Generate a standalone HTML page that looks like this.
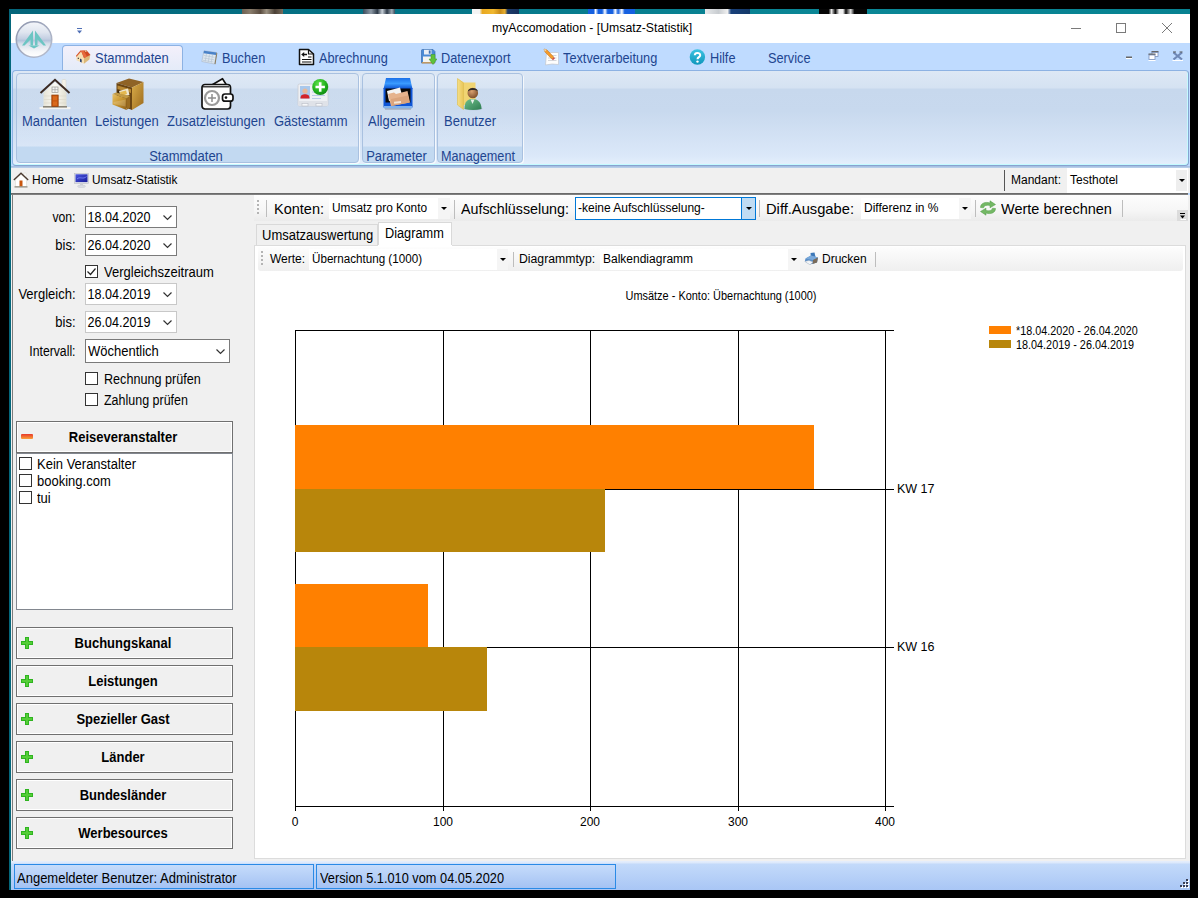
<!DOCTYPE html>
<html><head><meta charset="utf-8">
<style>
*{box-sizing:border-box;margin:0;padding:0}
html,body{width:1198px;height:898px;overflow:hidden;background:#000}
body{font-family:"Liberation Sans",sans-serif;font-size:12px;color:#000;position:relative}
.a{position:absolute}
.t{position:absolute;white-space:nowrap;line-height:1}
.rb{color:#1e4590;font-size:13px;transform:scaleY(1.08);transform-origin:50% 0}
.lbl{font-size:13px;transform:scaleY(1.08);transform-origin:100% 0}
.box{position:absolute;background:#fff;border:1px solid #7a7a7a}
.box2{position:absolute;background:#fff;border:1px solid #c8c8c8}
.cb{position:absolute;width:13px;height:13px;border:1px solid #333;background:#fff}
.btn{position:absolute;left:16px;width:217px;height:32px;border:1px solid #707070;background:#f0f0f0;box-shadow:inset 0 0 0 1px #fff}
.btn .t{font-weight:bold;font-size:13px;left:-1.500px;width:215px;text-align:center;top:8px;transform:scaleY(1.08);transform-origin:50% 0}

.grp{border:1px solid #a9c1e0;border-radius:4px;box-shadow:1px 1px 0 rgba(255,255,255,.75);background:linear-gradient(rgba(255,255,255,.08) 0,rgba(255,255,255,.05) 72px,#c2d9f1 73px,#c2d9f1 100%)}

.sg{font-size:15px;transform-origin:0 0}
.ax{width:40px;text-align:center;font-size:12px;transform:scaleY(1.08);transform-origin:50% 0}
.grip{width:2px;height:14px;background:repeating-linear-gradient(#b4b4b4 0,#b4b4b4 2px,transparent 2px,transparent 4px)}
.ms{transform:scaleY(1.08);transform-origin:0 0}
</style></head><body>
<!-- desktop strip -->
<div class="a" id="desk" style="left:9px;top:9px;width:1181px;height:5px;background:linear-gradient(90deg,#04657a 0,#06788a 40%,#0a8796 70%,#078291 100%)"></div>
<div class="a" style="left:242px;top:9px;width:41px;height:5px;background:linear-gradient(90deg,#6e6050,#8a7d6c 20%,#5a4c40 45%,#9a9080 60%,#4a4036 80%,#7a6c5c)"></div>
<div class="a" style="left:363px;top:9px;width:32px;height:5px;background:linear-gradient(90deg,#3b4c5c,#8e9aa6 25%,#2d3a48 45%,#c8d0d8 60%,#2d3a48 75%,#a0aab4 90%,#3b4c5c)"></div>
<div class="a" style="left:472px;top:9px;width:47px;height:5px;background:linear-gradient(90deg,#f4f4f4 0,#f4f4f4 16%,#e8a820 22%,#f0b830 45%,#c88a18 60%,#e8b030 70%,#1c3a6a 76%,#16305c 100%)"></div>
<div class="a" style="left:588px;top:9px;width:47px;height:5px;background:linear-gradient(90deg,#1560e0 0,#1560e0 12%,#fff 16%,#1560e0 22%,#1560e0 30%,#fff 36%,#1560e0 42%,#1560e0 52%,#fff 58%,#1560e0 64%,#fff 72%,#1560e0 78%,#1560e0 100%)"></div>
<div class="a" style="left:705px;top:9px;width:45px;height:5px;background:linear-gradient(90deg,#e8eaec 0,#c8ccd0 30%,#f0f0f0 50%,#18407a 58%,#143868 100%)"></div>
<div class="a" style="left:819px;top:9px;width:48px;height:5px;background:linear-gradient(90deg,#060606 0,#060606 20%,#e8e8e8 26%,#060606 34%,#f0f0f0 42%,#f0f0f0 50%,#060606 56%,#e0e0e0 66%,#060606 74%,#060606 100%)"></div>
<!-- window -->
<div class="a" id="win" style="left:9px;top:14px;width:1181px;height:876px;background:#bfdbff"></div>
<div class="a" style="left:9px;top:14px;width:2px;height:876px;background:#04677b"></div>
<!-- title bar -->
<div class="a" id="title" style="left:11px;top:14px;width:1179px;height:29px;background:#fff"></div>
<div class="t" style="left:492px;top:22px;font-size:12.25px;width:200px;text-align:center">myAccomodation - [Umsatz-Statistik]</div>

<!-- window controls -->
<svg class="a" style="left:1060px;top:14px" width="130" height="29" viewBox="0 0 130 29">
 <path d="M11 14.5H21" stroke="#7a7a7a" stroke-width="1" fill="none"/>
 <rect x="56.5" y="9.5" width="9" height="9" stroke="#7a7a7a" fill="none"/>
 <path d="M102 9L112 19M112 9L102 19" stroke="#7a7a7a" stroke-width="1" fill="none"/>
</svg>
<!-- QAT arrow -->
<svg class="a" style="left:76px;top:27px" width="8" height="8" viewBox="0 0 8 8"><path d="M1 1.5H6" stroke="#4f6fb5" stroke-width="1"/><path d="M1 3.5H6L3.5 6.5Z" fill="#4f6fb5"/></svg>
<!-- orb -->
<svg class="a" style="left:14px;top:20px" width="40" height="40" viewBox="0 0 40 40">
 <defs>
  <linearGradient id="og" x1="0" y1="0" x2="0" y2="1"><stop offset="0" stop-color="#f4f6fa"/><stop offset="0.30" stop-color="#dfe5ef"/><stop offset="0.48" stop-color="#c3cfe2"/><stop offset="0.53" stop-color="#b4c3db"/><stop offset="0.62" stop-color="#d6deea"/><stop offset="0.85" stop-color="#f7f8fa"/><stop offset="1" stop-color="#ffffff"/></linearGradient>
  <linearGradient id="os" x1="0" y1="0" x2="1" y2="1"><stop offset="0" stop-color="#8e96ae"/><stop offset="1" stop-color="#b8bfd0"/></linearGradient>
 </defs>
 <circle cx="20" cy="19.500" r="17.700" fill="url(#og)" stroke="url(#os)" stroke-width="1.600"/>
 <path d="M8 25.500L19 10.500V25.500H16.500V19.500L10.500 25.500Z" fill="#6cc5c3"/>
 <path d="M32 25.500L21 10.500V25.500H23.500V19.500L29.500 25.500Z" fill="#6cc5c3"/>
 <path d="M14.500 25.500H25.500L20 28.500Z" fill="#6cc5c3"/>
</svg>
<!-- ribbon tabs -->
<div class="a" style="left:62px;top:45px;width:121px;height:26px;border:1px solid #8db2e3;border-bottom:none;border-radius:4px 4px 0 0;background:linear-gradient(#f3f0fb,#e4ebf8)"></div>
<div class="t rb" style="left:95px;top:51px">Stammdaten</div>
<div class="t rb" style="left:222px;top:52px;font-size:12.75px">Buchen</div>
<div class="t rb" style="left:319px;top:52px;font-size:12.75px">Abrechnung</div>
<div class="t rb" style="left:441px;top:52px;font-size:12.75px">Datenexport</div>
<div class="t rb" style="left:563px;top:52px;font-size:12.75px">Textverarbeitung</div>
<div class="t rb" style="left:710px;top:52px;font-size:12.75px">Hilfe</div>
<div class="t rb" style="left:768px;top:52px;font-size:12.75px">Service</div>
<!-- ribbon body -->
<div class="a" id="ribbon" style="left:12px;top:70px;width:1177px;height:96px;border:1px solid #86a3d0;border-top-color:#8db2e3;border-left-color:#8db2e3;border-radius:4px;box-shadow:inset -1px -1px 0 #c4fbff;background:linear-gradient(#dde8f5 0,#d5e2f2 17px,#c7d8ed 18px,#c8d9ee 40px,#dbe8f9 85px,#e4effc 93px)"></div>
<div class="a" style="left:11px;top:166px;width:1179px;height:2px;background:linear-gradient(#a0badf,#bfd3ec)"></div>
<!-- groups -->
<div class="a grp" style="left:16px;top:73px;width:343px;height:90px"></div>
<div class="a grp" style="left:362px;top:73px;width:73px;height:90px"></div>
<div class="a grp" style="left:437px;top:73px;width:86px;height:90px"></div>
<div class="t rb" style="left:14.500px;width:343px;text-align:center;top:149px">Stammdaten</div>
<div class="t rb" style="left:360px;width:73px;text-align:center;top:149px">Parameter</div>
<div class="t rb" style="left:434.500px;width:86px;text-align:center;top:149px;transform:scale(.975,1.08)">Management</div>
<div class="t rb" style="left:22px;top:114px">Mandanten</div>
<div class="t rb" style="left:95px;top:114px">Leistungen</div>
<div class="t rb" style="left:167px;top:114px">Zusatzleistungen</div>
<div class="t rb" style="left:274px;top:114px">Gästestamm</div>
<div class="t rb" style="left:368px;top:114px">Allgemein</div>
<div class="t rb" style="left:444px;top:114px">Benutzer</div>

<!-- breadcrumb bar -->
<div class="a" style="left:11px;top:168px;width:1179px;height:25px;background:#f0f0f0"></div>
<div class="a" style="left:11px;top:193px;width:1177px;height:2px;background:linear-gradient(#5f5f5f,#8a8a8a)"></div>
<div class="t" style="left:32px;top:174px">Home</div>
<div class="t" style="left:92px;top:174px;transform:scaleX(.985);transform-origin:0 0">Umsatz-Statistik</div>
<div class="a" style="left:1004px;top:170px;width:1px;height:21px;background:#555"></div>
<div class="t" style="left:1011px;top:174px">Mandant:</div>
<div class="a" style="left:1067px;top:168px;width:121px;height:25px;background:#fff"></div>
<div class="a" style="left:1176px;top:170px;width:11px;height:21px;background:#eeeeee"></div>
<div class="t" style="left:1070px;top:174px">Testhotel</div>
<svg class="a" style="left:1179px;top:179px" width="6" height="3"><path d="M0 0H6L3 3Z" fill="#000"/></svg>
<!-- main bg -->
<div class="a" id="main" style="left:11px;top:195px;width:1179px;height:667px;background:#f0f0f0"></div>
<div class="a" style="left:12px;top:195px;width:1px;height:666px;background:#7c7c7c"></div>
<!-- left panel fields -->
<div class="t lbl" style="left:15px;width:60.500px;text-align:right;top:210px;transform:scale(.94,1.08)">von:</div>
<div class="box" style="left:85px;top:206px;width:92px;height:22px"></div>
<div class="t" style="left:87.500px;top:212px;font-size:12.6px;transform:scaleY(1.16);transform-origin:0 100%">18.04.2020</div>
<div class="t lbl" style="left:15px;width:60.500px;text-align:right;top:238px">bis:</div>
<div class="box" style="left:85px;top:234px;width:92px;height:22px"></div>
<div class="t" style="left:87.500px;top:240px;font-size:12.6px;transform:scaleY(1.16);transform-origin:0 100%">26.04.2020</div>
<div class="cb" style="left:85px;top:265px"></div>
<svg class="a" style="left:86px;top:266px" width="11" height="11"><path d="M1.5 5.5L4.5 8.5L9.5 2.5" stroke="#222" stroke-width="1.2" fill="none"/></svg>
<div class="t ms" style="left:104px;top:265px;font-size:13px">Vergleichszeitraum</div>
<div class="t lbl" style="left:15px;width:60.500px;text-align:right;top:287px">Vergleich:</div>
<div class="box2" style="left:85px;top:283px;width:92px;height:22px"></div>
<div class="t" style="left:87.500px;top:289px;font-size:12.6px;transform:scaleY(1.16);transform-origin:0 100%">18.04.2019</div>
<div class="t lbl" style="left:15px;width:60.500px;text-align:right;top:315px">bis:</div>
<div class="box2" style="left:85px;top:311px;width:92px;height:22px"></div>
<div class="t" style="left:87.500px;top:317px;font-size:12.6px;transform:scaleY(1.16);transform-origin:0 100%">26.04.2019</div>
<div class="t lbl" style="left:15px;width:60.500px;text-align:right;top:344px;transform:scale(.94,1.08)">Intervall:</div>
<div class="box" style="left:85px;top:339px;width:145px;height:24px"></div>
<div class="t ms" style="left:88px;top:344px;font-size:13px">Wöchentlich</div>
<div class="cb" style="left:85px;top:372px"></div>
<div class="t ms" style="left:104px;top:372px;font-size:13px;transform:scale(.97,1.08)">Rechnung prüfen</div>
<div class="cb" style="left:85px;top:393px"></div>
<div class="t ms" style="left:104px;top:393px;font-size:13px;transform:scale(.96,1.08)">Zahlung prüfen</div>
<!-- chevrons -->
<svg class="a" style="left:163px;top:215px" width="9" height="6"><path d="M0.5 0.5L4.5 4.5L8.5 0.5" stroke="#333" stroke-width="1.2" fill="none"/></svg>
<svg class="a" style="left:163px;top:243px" width="9" height="6"><path d="M0.5 0.5L4.5 4.5L8.5 0.5" stroke="#333" stroke-width="1.2" fill="none"/></svg>
<svg class="a" style="left:163px;top:292px" width="9" height="6"><path d="M0.5 0.5L4.5 4.5L8.5 0.5" stroke="#333" stroke-width="1.2" fill="none"/></svg>
<svg class="a" style="left:163px;top:320px" width="9" height="6"><path d="M0.5 0.5L4.5 4.5L8.5 0.5" stroke="#333" stroke-width="1.2" fill="none"/></svg>
<svg class="a" style="left:216px;top:349px" width="9" height="6"><path d="M0.5 0.5L4.5 4.5L8.5 0.5" stroke="#333" stroke-width="1.2" fill="none"/></svg>
<!-- Reiseveranstalter -->
<div class="btn" style="top:421px"><div class="t">Reiseveranstalter</div></div>
<div class="a" style="left:21px;top:434px;width:12px;height:5px;background:linear-gradient(#e8382a,#f9a23a);border-radius:1px"></div>
<div class="a" style="left:16px;top:453px;width:217px;height:157px;background:#fff;border:1px solid #82878f"></div>
<div class="cb" style="left:19px;top:457px"></div><div class="t ms" style="left:37px;top:457px;font-size:13px">Kein Veranstalter</div>
<div class="cb" style="left:19px;top:474px"></div><div class="t ms" style="left:37px;top:474px;font-size:13px">booking.com</div>
<div class="cb" style="left:19px;top:491px"></div><div class="t ms" style="left:37px;top:491px;font-size:13px">tui</div>
<div class="btn" style="top:627px"><div class="t">Buchungskanal</div></div>
<div class="btn" style="top:665px"><div class="t">Leistungen</div></div>
<div class="btn" style="top:703px"><div class="t">Spezieller Gast</div></div>
<div class="btn" style="top:741px"><div class="t">Länder</div></div>
<div class="btn" style="top:779px"><div class="t">Bundesländer</div></div>
<div class="btn" style="top:817px"><div class="t">Werbesources</div></div>
<svg class="a" style="left:21px;top:637px" width="12" height="12"><path d="M4 0H8V4H12V8H8V12H4V8H0V4H4Z" fill="#2fb420"/><path d="M5 1H7V5H11V7H7V11H5V7H1V5H5Z" fill="#6fe04a" opacity=".6"/></svg>
<svg class="a" style="left:21px;top:675px" width="12" height="12"><path d="M4 0H8V4H12V8H8V12H4V8H0V4H4Z" fill="#2fb420"/><path d="M5 1H7V5H11V7H7V11H5V7H1V5H5Z" fill="#6fe04a" opacity=".6"/></svg>
<svg class="a" style="left:21px;top:713px" width="12" height="12"><path d="M4 0H8V4H12V8H8V12H4V8H0V4H4Z" fill="#2fb420"/><path d="M5 1H7V5H11V7H7V11H5V7H1V5H5Z" fill="#6fe04a" opacity=".6"/></svg>
<svg class="a" style="left:21px;top:751px" width="12" height="12"><path d="M4 0H8V4H12V8H8V12H4V8H0V4H4Z" fill="#2fb420"/><path d="M5 1H7V5H11V7H7V11H5V7H1V5H5Z" fill="#6fe04a" opacity=".6"/></svg>
<svg class="a" style="left:21px;top:789px" width="12" height="12"><path d="M4 0H8V4H12V8H8V12H4V8H0V4H4Z" fill="#2fb420"/><path d="M5 1H7V5H11V7H7V11H5V7H1V5H5Z" fill="#6fe04a" opacity=".6"/></svg>
<svg class="a" style="left:21px;top:827px" width="12" height="12"><path d="M4 0H8V4H12V8H8V12H4V8H0V4H4Z" fill="#2fb420"/><path d="M5 1H7V5H11V7H7V11H5V7H1V5H5Z" fill="#6fe04a" opacity=".6"/></svg>

<!-- status bar -->
<div class="a" style="left:11px;top:861px;width:1179px;height:29px;background:linear-gradient(#e6effc 0,#dbe8fb 2px,#c3dafa 3px,#a9c6f5 100%)"></div>
<div class="a" style="left:14px;top:864px;width:300px;height:25px;border:1px solid #2a8ae6;background:linear-gradient(#c6dcfb,#a4c2f3)"></div>
<div class="a" style="left:316px;top:864px;width:300px;height:25px;border:1px solid #2a8ae6;background:linear-gradient(#c6dcfb,#a4c2f3)"></div>
<div class="t ms" style="left:17px;top:871px;font-size:13px">Angemeldeter Benutzer: Administrator</div>
<div class="t ms" style="left:320px;top:871px;font-size:13px;transform:scale(.983,1.08)">Version 5.1.010 vom 04.05.2020</div>

<!-- splitter / right panel -->
<!-- toolbar 1 -->
<div class="a" style="left:254px;top:195px;width:934px;height:26px;background:linear-gradient(#fdfdfd,#f6f6f6 60%,#ebebeb)"></div>
<div class="a grip" style="left:257px;top:200px"></div>
<div class="a" style="left:266px;top:200px;width:1px;height:17px;background:#bdbdbd"></div>
<div class="t sg" style="left:273.500px;top:201px;transform:scaleX(.967)">Konten:</div>
<div class="a" style="left:329px;top:198px;width:121px;height:21px;background:#fff"></div>
<div class="a" style="left:438px;top:198px;width:12px;height:21px;background:#f5f5f5"></div>
<div class="t" style="left:332px;top:202px;transform:scaleX(.99);transform-origin:0 0">Umsatz pro Konto</div>
<svg class="a" style="left:441px;top:207px" width="6" height="3"><path d="M0 0H6L3 3Z" fill="#000"/></svg>
<div class="a" style="left:454px;top:200px;width:1px;height:19px;background:#bdbdbd"></div>
<div class="t sg" style="left:461px;top:201px;transform:scaleX(.952)">Aufschlüsselung:</div>
<div class="a" style="left:575px;top:197px;width:181px;height:23px;background:#fff;border:1px solid #0078d7"></div>
<div class="a" style="left:741px;top:198px;width:14px;height:21px;background:#c0dcf3;border-left:1px solid #0078d7"></div>
<div class="t" style="left:578px;top:202px">-keine Aufschlüsselung-</div>
<svg class="a" style="left:746px;top:207px" width="6" height="3"><path d="M0 0H6L3 3Z" fill="#000"/></svg>
<div class="a" style="left:759px;top:200px;width:1px;height:17px;background:#bdbdbd"></div>
<div class="t sg" style="left:766px;top:201px;transform:scaleX(.98)">Diff.Ausgabe:</div>
<div class="a" style="left:861px;top:198px;width:110px;height:21px;background:#fff"></div>
<div class="a" style="left:959px;top:198px;width:12px;height:21px;background:#f5f5f5"></div>
<div class="t" style="left:864px;top:202px">Differenz in %</div>
<svg class="a" style="left:962px;top:207px" width="6" height="3"><path d="M0 0H6L3 3Z" fill="#000"/></svg>
<div class="a" style="left:975px;top:200px;width:1px;height:17px;background:#bdbdbd"></div>
<div class="t sg" style="left:1000.500px;top:201px;transform:scaleX(.966)">Werte berechnen</div>
<div class="a" style="left:1122px;top:200px;width:1px;height:17px;background:#bdbdbd"></div>
<!-- tabs -->
<div class="a" style="left:256px;top:224px;width:122px;height:22px;background:#f0f0f0;border:1px solid #d9d9d9;border-bottom:none"></div>
<div class="a" style="left:378px;top:222px;width:74px;height:25px;background:#fff;border:1px solid #d9d9d9;border-bottom:none"></div>
<div class="t ms" style="left:262px;top:228px;font-size:13px">Umsatzauswertung</div>
<div class="t ms" style="left:385px;top:226px;font-size:13px;transform:scale(.98,1.08)">Diagramm</div>
<!-- tab page -->
<div class="a" style="left:254px;top:245px;width:932px;height:614px;background:#fff;border:1px solid #dcdcdc;border-top:none"></div>
<div class="a" style="left:254px;top:245px;width:124px;height:1px;background:#dcdcdc"></div>
<div class="a" style="left:452px;top:245px;width:734px;height:1px;background:#dcdcdc"></div>
<!-- toolbar 2 -->
<div class="a" style="left:258px;top:247px;width:925px;height:24px;background:linear-gradient(#fdfdfd,#efefef);border-radius:0 0 3px 3px"></div>
<div class="a grip" style="left:261px;top:251px"></div>
<div class="t" style="left:270px;top:253px">Werte:</div>
<div class="a" style="left:309px;top:249px;width:199px;height:21px;background:#fff"></div>
<div class="a" style="left:497px;top:249px;width:11px;height:21px;background:#f5f5f5"></div>
<div class="t" style="left:311.500px;top:253px;transform:scaleX(.97);transform-origin:0 0">Übernachtung (1000)</div>
<svg class="a" style="left:499.500px;top:258px" width="6" height="3"><path d="M0 0H6L3 3Z" fill="#000"/></svg>
<div class="a" style="left:513px;top:252px;width:1px;height:15px;background:#bdbdbd"></div>
<div class="t" style="left:519px;top:253px;transform:scaleX(1.02);transform-origin:0 0">Diagrammtyp:</div>
<div class="a" style="left:600px;top:249px;width:200px;height:21px;background:#fff"></div>
<div class="a" style="left:788px;top:249px;width:12px;height:21px;background:#f5f5f5"></div>
<div class="t" style="left:603px;top:253px">Balkendiagramm</div>
<svg class="a" style="left:791px;top:258px" width="6" height="3"><path d="M0 0H6L3 3Z" fill="#000"/></svg>
<div class="t" style="left:822px;top:253px">Drucken</div>
<div class="a" style="left:875px;top:252px;width:1px;height:15px;background:#bdbdbd"></div>
<!-- chart -->
<div class="t" style="left:625px;top:291px;font-size:11px;width:192px;text-align:center;transform:scale(.995,1.12)">Umsätze - Konto: Übernachtung (1000)</div>
<svg class="a" style="left:255px;top:272px" width="930" height="586" viewBox="255 272 930 586" shape-rendering="crispEdges">
 <g stroke="#000" stroke-width="1" fill="none">
  <path d="M295.5 330V811M443.5 330V811M590.5 330V811M738.5 330V811M885.5 330V811"/>
  <path d="M295 330.5H894M295 806.5H894M295 489.5H894M295 647.5H894"/>
 </g>
 <rect x="295" y="425" width="519" height="64" fill="#ff8000"/>
 <rect x="295" y="489" width="310" height="63" fill="#b8860b"/>
 <rect x="295" y="584" width="133" height="63" fill="#ff8000"/>
 <rect x="295" y="647" width="192" height="64" fill="#b8860b"/>
 <rect x="989" y="326" width="22" height="8" fill="#ff8000"/>
 <rect x="989" y="340" width="22" height="8" fill="#b8860b"/>
</svg>
<div class="t ms" style="left:897px;top:482px;font-size:12.5px">KW 17</div>
<div class="t ms" style="left:897px;top:640px;font-size:12.5px">KW 16</div>
<div class="t ax" style="left:275px;top:815px">0</div>
<div class="t ax" style="left:423px;top:815px">100</div>
<div class="t ax" style="left:570px;top:815px">200</div>
<div class="t ax" style="left:718px;top:815px">300</div>
<div class="t ax" style="left:865px;top:815px">400</div>
<div class="t" style="left:1016px;top:325px;font-size:11px;transform:scale(.98,1.12);transform-origin:0 0">*18.04.2020 - 26.04.2020</div>
<div class="t" style="left:1016px;top:339px;font-size:11px;transform:scale(.985,1.12);transform-origin:0 0">18.04.2019 - 26.04.2019</div>

<!-- ===== ICONS ===== -->
<!-- big house (Mandanten) 32x32 at 39,78 -->
<svg class="a" style="left:39px;top:78px" width="32" height="32" viewBox="0 0 32 32">
 <defs><linearGradient id="hw" x1="0" y1="0" x2="1" y2="0"><stop offset="0" stop-color="#e6e3d6"/><stop offset=".5" stop-color="#fbfaf4"/><stop offset="1" stop-color="#e2dfd0"/></linearGradient></defs>
 <rect x="0.5" y="29" width="31" height="2.2" fill="#f4f4f2"/>
 <rect x="23" y="1.5" width="4" height="11" rx="1" fill="#f3f1e8" stroke="#d5d2c4" stroke-width=".5"/>
 <path d="M4.5 14.5L16 4L27.500 14.500V29H4.500Z" fill="url(#hw)"/>
 <path d="M5 18H27M5 21.500H27M5 25H27" stroke="#dcd9ca" stroke-width=".7"/>
 <rect x="4" y="28" width="24" height="1.600" fill="#8a8578"/>
 <path d="M1.5 15L16 1.800L30.500 15" stroke="#3b2a22" stroke-width="2" fill="none" stroke-linejoin="miter"/>
 <rect x="13" y="9" width="6" height="5.500" fill="#f4f4f4" stroke="#9a9a94" stroke-width=".7"/>
 <path d="M16 9V14.500M13 11.700H19" stroke="#9a9a94" stroke-width=".6"/>
 <rect x="12.800" y="17" width="6.400" height="11.500" fill="#c8560f" stroke="#8e3c08" stroke-width=".7"/>
 <rect x="14" y="18.300" width="4" height="4" fill="#d9691c"/><rect x="14" y="23.500" width="4" height="4" fill="#d9691c"/>
</svg>
<!-- cabinet (Leistungen) at 112,78 -->
<svg class="a" style="left:112px;top:78px" width="33" height="33" viewBox="0 0 33 33">
 <defs><linearGradient id="cb1" x1="0" y1="0" x2="1" y2="1"><stop offset="0" stop-color="#d9ac4a"/><stop offset="1" stop-color="#9c6a1c"/></linearGradient>
 <linearGradient id="cb2" x1="0" y1="0" x2="1" y2="1"><stop offset="0" stop-color="#e8c268"/><stop offset=".5" stop-color="#c7952f"/><stop offset="1" stop-color="#8d5e18"/></linearGradient></defs>
 <path d="M4.500 5L17 0.500L31.500 4L20 9.500Z" fill="#8f6326"/>
 <path d="M20 9.500L31.500 4V25L20 32Z" fill="url(#cb1)"/>
 <path d="M4.500 5L20 9.500V32L4.500 26Z" fill="#6b4512"/>
 <path d="M5.500 7.500L19 11.300V15L5.500 11Z" fill="#b98a35"/>
 <path d="M5.500 12L12 14V17L5.500 15Z" fill="#3d2808"/>
 <path d="M7 13L16 10.500L17.500 17L9 19Z" fill="#efe7cf"/>
 <path d="M8 14L14 12.500L15 16L9 18Z" fill="#e4b84e"/>
 <path d="M0.500 16L14.500 20.500V32L0.500 26.500Z" fill="url(#cb2)"/>
 <path d="M14.500 20.500L18 18V29.500L14.500 32Z" fill="#9a6b20"/>
 <path d="M0.500 16L4 14.500L18 18L14.500 20.500Z" fill="#c29a44"/>
 <path d="M1.500 24L13.500 21.500V28.500L1.500 26Z" fill="#ffffff" opacity=".18"/>
</svg>
<!-- wallet (Zusatzleistungen) at 200,77 -->
<svg class="a" style="left:200px;top:77px" width="34" height="34" viewBox="0 0 34 34">
 <path d="M11 8.500L22.500 1.700L26.500 8" fill="#fff" stroke="#111" stroke-width="1.600" stroke-linejoin="round"/>
 <rect x="2" y="7.500" width="28.500" height="24.500" rx="3" fill="#fdfdfd" stroke="#111" stroke-width="1.700"/>
 <path d="M3 9.800H29" stroke="#111" stroke-width="1.200"/>
 <circle cx="12" cy="21" r="7" fill="#fff" stroke="#9a9a9a" stroke-width="2.200"/>
 <path d="M12 17V25M8 21H16" stroke="#8e8e8e" stroke-width="1.500"/>
 <rect x="22.500" y="17" width="10.500" height="7.200" rx="2.500" fill="#fff" stroke="#111" stroke-width="1.700"/>
 <circle cx="26" cy="20.600" r="1.300" fill="#111"/>
</svg>
<!-- guest card (Gaestestamm) at 297,78 -->
<svg class="a" style="left:297px;top:78px" width="34" height="32" viewBox="0 0 34 32">
 <defs><radialGradient id="gp" cx=".4" cy=".3" r=".8"><stop offset="0" stop-color="#5fe24a"/><stop offset=".6" stop-color="#1eae1a"/><stop offset="1" stop-color="#0d7d12"/></radialGradient></defs>
 <rect x="1" y="6" width="30" height="22" rx="1.500" fill="#eef0f4" stroke="#c9ccd3" stroke-width=".8"/>
 <rect x="1.400" y="23" width="29.200" height="5" fill="#dfe2e8"/>
 <rect x="5" y="25.500" width="6" height="2.500" fill="#f7f8fa" stroke="#b9bdc6" stroke-width=".6"/>
 <rect x="19" y="25.500" width="6" height="2.500" fill="#f7f8fa" stroke="#b9bdc6" stroke-width=".6"/>
 <rect x="3" y="8" width="10" height="12.500" fill="#a9c8ec"/>
 <circle cx="8" cy="13" r="2.600" fill="#e8b99a"/>
 <path d="M3.500 20.500C3.500 17 5.500 16.300 8 16.300S12.500 17 12.500 20.500Z" fill="#d2232a"/>
 <path d="M15 14H28M15 17.500H28M15 20.500H24" stroke="#b8cbe6" stroke-width="1"/>
 <circle cx="23.200" cy="9" r="8" fill="url(#gp)"/>
 <path d="M23.200 4.300V13.700M18.500 9H27.900" stroke="#fff" stroke-width="2.600"/>
</svg>
<!-- blue box (Allgemein) at 382,77 -->
<svg class="a" style="left:382px;top:77px" width="32" height="33" viewBox="0 0 32 33">
 <defs><linearGradient id="bb" x1="0" y1="0" x2="0" y2="1"><stop offset="0" stop-color="#1b6fe8"/><stop offset=".5" stop-color="#3a9bff"/><stop offset="1" stop-color="#0a4fd0"/></linearGradient></defs>
 <path d="M4 1H28L30.500 12H1.500Z" fill="url(#bb)"/>
 <rect x="1.500" y="11" width="29" height="19.500" fill="#0f55d6"/>
 <rect x="3.500" y="11.500" width="25" height="14" fill="#0a0a0a"/>
 <path d="M5 14L18 10.500L21 22L7 24Z" fill="#f3f3f3"/>
 <path d="M6 17L12 15.500L14 17L25.500 14L28 25.500L9 29Z" fill="#e6b38d"/>
 <path d="M9 22L26 18.500L27.500 25.500L9.500 29Z" fill="#dba47c"/>
 <rect x="12" y="24.500" width="7" height="2" fill="#f4e6d8" transform="rotate(-6 15 25)"/>
 <rect x="2" y="29" width="28" height="2.500" fill="#7fb2ee"/>
 <rect x="3" y="31.500" width="26" height="1" fill="#8d97a8"/>
</svg>
<!-- user folder (Benutzer) at 456,78 -->
<svg class="a" style="left:456px;top:78px" width="30" height="33" viewBox="0 0 30 33">
 <defs><linearGradient id="fy" x1="0" y1="0" x2="1" y2="0"><stop offset="0" stop-color="#f6df86"/><stop offset="1" stop-color="#e8c558"/></linearGradient>
 <radialGradient id="hd" cx=".4" cy=".35" r=".7"><stop offset="0" stop-color="#d9a070"/><stop offset="1" stop-color="#7a4a28"/></radialGradient>
 <linearGradient id="bd" x1="0" y1="0" x2="1" y2="1"><stop offset="0" stop-color="#6fc08c"/><stop offset="1" stop-color="#2e7c50"/></linearGradient></defs>
 <path d="M1.500 0.500L8 4.500H19.500V27H8L1.500 27Z" fill="#f0d472"/>
 <path d="M1.500 0.500L7.500 5V31.500L1.500 27Z" fill="url(#fy)" stroke="#d8b84a" stroke-width=".5"/>
 <ellipse cx="17.500" cy="30.500" rx="9" ry="1.800" fill="#9aa8c0" opacity=".45"/>
 <path d="M8.500 31C8.500 23.500 11.500 21 16.500 21S25.500 24 25.500 31Q17 33 8.500 31Z" fill="url(#bd)"/>
 <path d="M14.500 21.500L16.500 26L18.500 21.500Z" fill="#e7efe9"/>
 <circle cx="16.800" cy="15" r="5.300" fill="url(#hd)"/>
 <path d="M11.800 13.500C12 9.500 20.500 8.500 22 13.500C20 11.800 14.500 11.500 11.800 13.500Z" fill="#2f2a26"/>
</svg>
<!-- small house (tab) at 75,50 -->
<svg class="a" style="left:75.700px;top:50.400px" width="16" height="15" viewBox="0 0 16 15">
 <path d="M0.500 10.200V6L5 1L8 7.500V13.800Z" fill="#f6dfb2"/>
 <path d="M8 7.500L14.200 5L13.400 9.600L8 13.800Z" fill="#dcb878"/>
 <path d="M5 0.800L10.500 0.300L14.500 5L8 8Z" fill="#cf4a22"/>
 <path d="M5 0.800L7.500 0.600L11 6.600L8 8Z" fill="#e56a3c"/>
 <path d="M5.100 0.700L0.200 6.300" stroke="#d8532a" stroke-width="1.100"/>
 <rect x="9" y="0" width="1.500" height="2" fill="#e0b890"/>
 <path d="M4.100 8.600L5.600 9.400V12.600L4.100 11.800Z" fill="#12306a"/>
 <rect x="1.800" y="7.700" width="1" height="1.300" fill="#2a2a3a"/>
</svg>
<!-- calendar (Buchen) at 201,50 -->
<svg class="a" style="left:201px;top:50px" width="17" height="15" viewBox="0 0 17 15">
 <path d="M3 0.800L15.500 2.500L13.500 14L0.800 11.500Z" fill="#dfe8f0" stroke="#aab6c4" stroke-width=".6"/>
 <path d="M3 0.800L15.500 2.500L15 5L2.500 3.200Z" fill="#4a82c8"/>
 <path d="M13.500 14L15.500 2.500L16.300 3.300L14.500 14.200Z" fill="#8a7a5a"/>
 <path d="M3 5.500L13.500 7.300M2.500 8L13 9.800M2 10.300L12.500 12" stroke="#b6c6d6" stroke-width=".7"/>
 <path d="M5.500 4L4.200 11.500M8.500 4.500L7.200 12.200M11.500 5L10.200 12.800" stroke="#b6c6d6" stroke-width=".7"/>
</svg>
<!-- document (Abrechnung) at 298,48 -->
<svg class="a" style="left:298px;top:48px" width="17" height="18" viewBox="0 0 17 18">
 <path d="M1.500 1.500H10.500L15.500 6V16.500H1.500Z" fill="#fff" stroke="#111" stroke-width="1.500" stroke-linejoin="round"/>
 <path d="M10.500 1.500V6H15.500" fill="none" stroke="#111" stroke-width="1.200"/>
 <path d="M3.200 6.500L6.200 4V5.700H9V7.300H6.200V9Z" fill="#111"/>
 <path d="M10 9H13.500M4 11.500H13.500M4 14H13.500" stroke="#111" stroke-width="1.100"/>
</svg>
<!-- floppy (Datenexport) at 421,49 -->
<svg class="a" style="left:421px;top:49px" width="16" height="16" viewBox="0 0 16 16">
 <path d="M0.500 1.500Q0.500 0.500 1.500 0.500H12L14 2.500V14H0.500Z" fill="#4a8ad4" stroke="#2c62a8" stroke-width=".6"/>
 <rect x="3" y="0.800" width="7.500" height="4.700" fill="#e9eef5"/><rect x="7.800" y="1.400" width="1.800" height="3.300" fill="#3c6fb0"/>
 <rect x="2" y="7.500" width="10" height="5.500" fill="#f3f3f0"/>
 <rect x="0.800" y="13.200" width="13" height="1.200" fill="#e2a04a"/>
 <path d="M10 5.500H14V10H16L12 15.500L8 10H10Z" fill="#5fc13b" stroke="#3d9a22" stroke-width=".5"/>
</svg>
<!-- text (Textverarbeitung) at 543,48 -->
<svg class="a" style="left:543px;top:48px" width="17" height="18" viewBox="0 0 17 18">
 <path d="M3.500 4.500H15.500V16.500Q9 15.300 2.500 17Z" fill="#fdfdfd" stroke="#c3c6cc" stroke-width=".7"/>
 <path d="M5 10H13.500M5 12.500H13.500M9 7.500H13.500" stroke="#c9ccd2" stroke-width=".8"/>
 <path d="M1 1L3.800 1.800L11 9.300L9 11.200L1.800 3.800Z" fill="#f59b2b" stroke="#b86a14" stroke-width=".5"/>
 <path d="M1 1L3.800 1.800L1.800 3.800Z" fill="#f0d8b0"/>
 <path d="M9 11.200L11 9.300L12 10.300L10 12.200Z" fill="#d04a4a"/>
</svg>
<!-- help (Hilfe) at 689,49 -->
<svg class="a" style="left:689px;top:49px" width="17" height="17" viewBox="0 0 17 17">
 <defs><linearGradient id="hg" x1="0" y1="0" x2="0" y2="1"><stop offset="0" stop-color="#3cc3e2"/><stop offset="1" stop-color="#0e96bb"/></linearGradient></defs>
 <circle cx="8.400" cy="8" r="7.700" fill="url(#hg)"/>
 <path d="M5.800 6.300C5.800 3.200 11.200 3.200 11.200 6.200C11.200 8.200 8.500 8 8.500 10.200" stroke="#fff" stroke-width="2" fill="none"/>
 <circle cx="8.500" cy="12.600" r="1.200" fill="#fff"/>
</svg>
<!-- MDI child controls -->
<svg class="a" style="left:1120px;top:48px" width="70" height="18" viewBox="0 0 70 18">
 <rect x="6" y="8.500" width="6" height="1.500" fill="#666"/><rect x="6" y="10" width="6" height="1" fill="#fff"/>
 <rect x="31.500" y="3" width="7" height="1.500" fill="#666"/><rect x="32" y="4.500" width="6" height="4" fill="#fff" stroke="#7a8fb8" stroke-width=".8"/>
 <rect x="28.500" y="5.500" width="7" height="1.500" fill="#666"/><rect x="29" y="7" width="6" height="4.500" fill="#fff" stroke="#7a8fb8" stroke-width=".8"/>
 <rect x="28.500" y="12" width="7" height="1" fill="#fff"/>
 <path d="M53.500 4.500L62 11.500M62 4.500L53.500 11.500" stroke="#6f88b6" stroke-width="2.200"/>
 <path d="M53 4H56M59.500 4H62.500" stroke="#555" stroke-width="1"/>
 <path d="M52.500 12.500H63" stroke="#fff" stroke-width="1"/>
</svg>
<!-- breadcrumb home icon at 13,172 -->
<svg class="a" style="left:13px;top:172px" width="16" height="16" viewBox="0 0 16 16">
 <rect x="11" y="1" width="2" height="5" fill="#ffffff" stroke="#d6d4ca" stroke-width=".4"/>
 <path d="M2.500 7.500L8 2.500L13.500 7.500V14.500H2.500Z" fill="#ffffff" stroke="#d6d4ca" stroke-width=".5"/>
 <path d="M0.800 8L8 1.200L15.200 8" stroke="#4a3a30" stroke-width="1.300" fill="none"/>
 <rect x="6.500" y="8.500" width="3" height="6" fill="#c8560f"/>
 <rect x="1.500" y="14.300" width="13" height="1.200" fill="#8a8578"/>
</svg>
<!-- monitor icon at 74,173 -->
<svg class="a" style="left:74px;top:173px" width="15" height="15" viewBox="0 0 15 15">
 <defs><linearGradient id="mg" x1="0" y1="0" x2="1" y2="1"><stop offset="0" stop-color="#4a55e0"/><stop offset="1" stop-color="#1a1f9a"/></linearGradient></defs>
 <rect x="0.500" y="0.500" width="14" height="10" fill="#e3e5ea" stroke="#b9bcc4" stroke-width=".6"/>
 <rect x="1.500" y="1.300" width="12" height="7.800" fill="url(#mg)"/>
 <path d="M3 6C6 3 9 7 12.500 3.500" stroke="#7f8cff" stroke-width=".8" fill="none"/>
 <rect x="6" y="10.500" width="3" height="2" fill="#cfd2d8"/>
 <ellipse cx="7.500" cy="13.300" rx="4" ry="1.200" fill="#dcdfe4" stroke="#b9bcc4" stroke-width=".4"/>
</svg>
<!-- refresh icon at 979,200 -->
<svg class="a" style="left:979px;top:200px" width="18" height="16" viewBox="0 0 18 16">
 <path d="M1.500 7.500C1.500 3.500 5.500 2 9 2.500L11 3V0.800L16.500 4.500L11 7.800V5.500C8 4.800 5 5.200 4.500 7.800Z" fill="#74b865" stroke="#4f9a44" stroke-width=".5"/>
 <path d="M16.500 8.500C16.500 12.500 12.500 14 9 13.500L7 13V15.200L1.500 11.500L7 8.200V10.500C10 11.200 13 10.800 13.500 8.200Z" fill="#74b865" stroke="#4f9a44" stroke-width=".5"/>
</svg>
<!-- toolbar overflow -->
<div class="a" style="left:1177px;top:210px;width:11px;height:11px;background:#dcdcdc"></div>
<svg class="a" style="left:1179px;top:212px" width="8" height="8" viewBox="0 0 8 8"><path d="M1 1.500H6" stroke="#000" stroke-width="1"/><path d="M1 3.500H6L3.500 6.500Z" fill="#000"/><path d="M1.500 7.500H7" stroke="#fff"/></svg>
<!-- printer icon at 804,252 -->
<svg class="a" style="left:804px;top:252px" width="15" height="14" viewBox="0 0 15 14">
 <path d="M6.500 1L10.500 0.500L11.500 5L7 5.500Z" fill="#3d78b8"/>
 <path d="M1.500 6.500L7 3.500L14 5.500L13 10.500L6 12.500L0.800 9.500Z" fill="#5a8fc8"/>
 <path d="M7 3.500L14 5.500L9 8L1.500 6.500Z" fill="#7aa9da"/>
 <path d="M9 8L14 5.500L13 10.500L8.500 12Z" fill="#7a6a58"/>
 <path d="M0.800 9.500L5 8.500L9 10L6 12.800Z" fill="#f4f6f8" stroke="#a8b0ba" stroke-width=".4"/>
</svg>
<svg class="a" style="left:1178px;top:878px" width="12" height="12" viewBox="0 0 12 12"><g fill="#3a3f55"><rect x="8" y="1" width="2" height="2"/><rect x="5" y="4" width="2" height="2"/><rect x="8" y="4" width="2" height="2"/><rect x="2" y="7" width="2" height="2"/><rect x="5" y="7" width="2" height="2"/><rect x="8" y="7" width="2" height="2"/></g><g fill="#fff"><rect x="9" y="2" width="2" height="2"/><rect x="6" y="5" width="2" height="2"/><rect x="9" y="5" width="2" height="2"/><rect x="3" y="8" width="2" height="2"/><rect x="6" y="8" width="2" height="2"/><rect x="9" y="8" width="2" height="2"/></g><g fill="#3a3f55"><rect x="8" y="1" width="2" height="2"/><rect x="5" y="4" width="2" height="2"/><rect x="8" y="4" width="2" height="2"/><rect x="2" y="7" width="2" height="2"/><rect x="5" y="7" width="2" height="2"/><rect x="8" y="7" width="2" height="2"/></g></svg>
</body></html>
